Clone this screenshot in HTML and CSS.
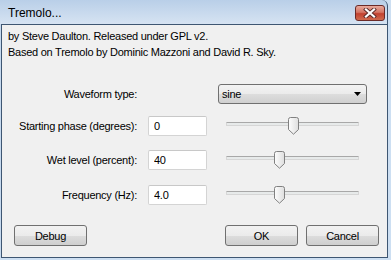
FILE: index.html
```html
<!DOCTYPE html>
<html lang="en">
<head>
    <meta charset="UTF-8">
    <title>Tremolo...</title>
    <link rel="stylesheet" href="styles.css">
</head>
<body>
    <div class="ventana">
        <div class="titulo">
            <span class="titulo-texto">Tremolo...</span>
            <div class="cerrar">
                <svg width="14" height="10" viewBox="0 0 14 10">
                    <path d="M3 1.5 L11 8.5 M11 1.5 L3 8.5" stroke="#5a2a28" stroke-width="4" stroke-linecap="square"/>
                    <path d="M3 1.5 L11 8.5 M11 1.5 L3 8.5" stroke="#ffffff" stroke-width="2.2" stroke-linecap="square"/>
                </svg>
            </div>
        </div>
        <div class="cliente">
            <p class="info">by Steve Daulton. Released under GPL v2.<br>Based on Tremolo by Dominic Mazzoni and David R. Sky.</p>

            <div class="formulario">
                <label class="etiqueta">Waveform type:</label>
                <div class="combo">
                    <span>sine</span>
                    <svg width="7" height="4" viewBox="0 0 7 4"><polygon points="0,0 7,0 3.5,4" fill="#000"/></svg>
                </div>

                <label class="etiqueta">Starting phase (degrees):</label>
                <input class="caja" type="text" value="0">
                <div class="deslizador">
                    <div class="pista"></div>
                    <div class="pulgar" style="left: 50%"></div>
                </div>

                <label class="etiqueta">Wet level (percent):</label>
                <input class="caja" type="text" value="40">
                <div class="deslizador">
                    <div class="pista"></div>
                    <div class="pulgar" style="left: 40%"></div>
                </div>

                <label class="etiqueta">Frequency (Hz):</label>
                <input class="caja" type="text" value="4.0">
                <div class="deslizador">
                    <div class="pista"></div>
                    <div class="pulgar" style="left: 40%"></div>
                </div>
            </div>

            <div class="botones">
                <button>Debug</button>
                <div class="espacio"></div>
                <button>OK</button>
                <button>Cancel</button>
            </div>
        </div>
    </div>
</body>
</html>
```
FILE: styles.css
```css
body {
    margin: 0;
    background-color: #cddff2;
    font-family: "Liberation Sans", Arial, sans-serif;
    font-size: 11px;
    letter-spacing: -0.25px;
    color: #000;
}
.ventana {
    width: 388px;
    height: 258px;
    box-sizing: border-box;
    display: flex;
    flex-direction: column;
    border-right: 1px solid #3e5672;
    border-top-right-radius: 6px;
    background: linear-gradient(#b9cfe8, #d6e3f2 24px, #c6d9ee 24px);
}
.titulo {
    height: 24px;
    display: flex;
    align-items: flex-start;
    padding-left: 8px;
}
.titulo-texto {
    font-size: 12px;
    letter-spacing: 0;
    line-height: 14px;
    margin-top: 6px;
    flex: 1;
    color: #000;
}
.cerrar {
    width: 30px;
    height: 16px;
    box-sizing: border-box;
    margin-top: 5px;
    margin-right: 2px;
    border: 1px solid #6b2a27;
    border-radius: 3px;
    background: linear-gradient(#e8a99c, #d47564 45%, #c2412f 55%, #cf6a4e);
    display: flex;
    align-items: center;
    justify-content: center;
}
.cliente {
    flex: 1;
    margin-left: 1px;
    border: 1px solid #3e5672;
    border-right: none;
    background-color: #f0f0f0;
    display: flex;
    flex-direction: column;
}
.info {
    margin: 0;
    padding: 3px 0 0 6px;
    line-height: 16px;
}
.formulario {
    display: grid;
    grid-template-columns: 129px 59px 149px;
    grid-template-rows: 32px 34px 35px 20px;
    column-gap: 11px;
    margin-top: 24px;
    padding-left: 6px;
}
.etiqueta {
    grid-column: 1;
    text-align: right;
    line-height: 20px;
    height: 20px;
}
.combo {
    grid-column: 3;
    height: 20px;
    box-sizing: border-box;
    border: 1px solid #707070;
    border-radius: 3px;
    background: linear-gradient(#f3f3f3, #ebebeb 50%, #dddddd 50%, #d0d0d0);
    display: flex;
    align-items: center;
    justify-content: space-between;
    padding: 0 5px 0 3px;
    line-height: 16px;
}
.caja {
    grid-column: 2;
    height: 20px;
    width: 59px;
    box-sizing: border-box;
    border: 1px solid #d4d4d4;
    border-top-color: #c8c8c8;
    border-radius: 2px;
    background: #fff;
    padding: 0 0 0 5px;
    margin: 0;
    font-family: inherit;
    font-size: 11px;
    letter-spacing: inherit;
    outline: none;
}
.deslizador {
    grid-column: 3;
    height: 20px;
    position: relative;
    margin: 0 8px;
}
.pista {
    margin-top: 6px;
    height: 2px;
    border: 1px solid #d6d6d6;
    border-top-color: #a8a8a8;
    background: #e7eaea;
    border-radius: 1px;
}
.pulgar {
    position: absolute;
    top: 1px;
    width: 11px;
    height: 18px;
    margin-left: -5px;
    background: no-repeat url("data:image/svg+xml;utf8,<svg xmlns='http://www.w3.org/2000/svg' width='11' height='18'><defs><linearGradient id='g' x1='0' x2='1'><stop offset='0' stop-color='%23fdfdfd'/><stop offset='1' stop-color='%23dedede'/></linearGradient></defs><path d='M0.5 2.5 Q0.5 0.5 2.5 0.5 H8.5 Q10.5 0.5 10.5 2.5 V12.5 L5.5 17.2 L0.5 12.5 Z' fill='url(%23g)' stroke='%23808080'/></svg>");
}
.botones {
    display: flex;
    gap: 8px;
    margin-top: 20px;
    padding: 0 8px 0 12px;
}
.espacio {
    flex: 1;
}
button {
    width: 73px;
    height: 21px;
    box-sizing: border-box;
    border: 1px solid #707070;
    border-radius: 3px;
    background: linear-gradient(#f2f2f2, #ebebeb 50%, #dddddd 50%, #cfcfcf);
    font-family: inherit;
    font-size: 11px;
    letter-spacing: inherit;
    color: #000;
    padding: 0;
}
```
